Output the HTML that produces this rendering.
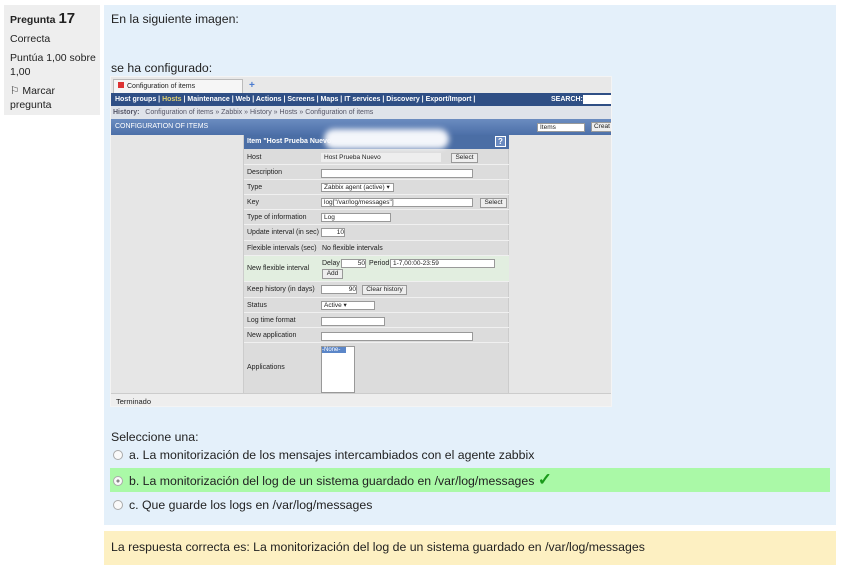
<!DOCTYPE html>
<html><head><meta charset="utf-8"><style>
*{margin:0;padding:0;box-sizing:border-box}
body{width:848px;height:578px;background:#fff;font-family:"Liberation Sans",Arial,sans-serif;position:relative;overflow:hidden;color:#222}
.a{position:absolute}
.info{left:4px;top:5px;width:96px;height:110px;background:#eee;font-size:10.5px;padding:7px 6px;line-height:14px}
.q{left:104px;top:5px;width:732px;height:520px;background:#e4f0fa}
.ans{left:104px;top:531px;width:732px;height:34px;background:#fdf0c2;font-size:12.3px;padding:9px 7px}
.t{font-size:12.3px}
.img{left:110px;top:76px;width:502px;height:331px;background:#fff;border:1px solid #f4f4f4;overflow:hidden;font-size:7px}
.img .a{font-size:7px}
.r{position:absolute;left:0;width:265px;border-bottom:1px solid #f0f0f0;padding-left:3px}
.in{position:absolute;background:#fff;border:1px solid #999;height:9px;font-size:6.5px;padding-left:2px;line-height:8px}
.btn{position:absolute;background:#eee;border:1px solid #999;height:10px;font-size:6.5px;text-align:center;line-height:8px}
.rad{display:inline-block;width:10px;height:10px;border-radius:50%;border:1px solid #aaa;background:#fafafa;vertical-align:-1px;margin-right:6px}
</style></head><body>
<div class="a info"><b style="font-size:10.5px">Pregunta</b> <b style="font-size:15px">17</b><div style="margin-top:5px">Correcta</div><div style="margin-top:5px;white-space:nowrap">Puntúa 1,00 sobre<br>1,00</div><div style="margin-top:5px">⚐ Marcar pregunta</div></div>
<div class="a q"></div>
<div class="a t" style="left:111px;top:12px">En la siguiente imagen:</div>
<div class="a t" style="left:111px;top:61px">se ha configurado:</div>
<div class="a img">
 <div class="a" style="left:0;top:0;width:500px;height:16px;background:#e8e8e8"></div>
 <div class="a" style="left:2px;top:2px;width:130px;height:14px;background:#f6f6f6;border:1px solid #bbb;border-bottom:none;padding:2px 4px"><span style="display:inline-block;width:6px;height:6px;background:#d33;margin-right:3px"></span>Configuration of items</div>
 <div class="a" style="left:138px;top:3px;color:#4a7bd0;font-size:10px;font-weight:bold">+</div>
 <div class="a" style="left:0;top:16px;width:500px;height:13px;background:#2f4f85;color:#fff;font-weight:bold;padding:3px 4px;white-space:nowrap">Host groups | <span style="color:#e0d070">Hosts</span> | Maintenance | Web | Actions | Screens | Maps | IT services | Discovery | Export/Import |<span style="position:absolute;left:440px">SEARCH:</span><span style="position:absolute;left:472px;top:2px;width:30px;height:9px;background:#fff"></span></div>
 <div class="a" style="left:0;top:29px;width:500px;height:13px;background:#dfe3ea;color:#556;padding:3px 2px"><b>History:</b> &nbsp; Configuration of items » Zabbix » History » Hosts » Configuration of items</div>
 <div class="a" style="left:0;top:42px;width:500px;height:16px;background:linear-gradient(#6b8cc0,#4c6fa8);color:#fff;padding:4px 4px">CONFIGURATION OF ITEMS</div>
 <div class="in" style="left:426px;top:46px;width:48px">Items</div>
 <div class="btn" style="left:480px;top:45px;width:22px">Creat</div>
 <div class="a" style="left:0;top:58px;width:500px;height:258px;background:#e6e6e6"></div>
 <div class="a" style="left:132px;top:58px;width:266px;height:258px;background:#dcdcdc;border-left:1px solid #ccc;border-right:1px solid #ccc">
  <div class="a" style="left:0;top:0;width:265px;height:14px;background:#4b6ea5;color:#fff;font-weight:bold;padding:3px 3px">Item "Host Prueba Nuevo<span style="position:absolute;left:80px;top:-6px;width:125px;height:20px;background:#f4f6fb;border-radius:10px;filter:blur(3px)"></span><span style="position:absolute;right:3px;top:1px;width:11px;height:11px;background:#6a8ac0;border:1px solid #fff;text-align:center;font-size:8px">?</span></div>
  <div class="r" style="top:15px;height:15px;line-height:15px">Host</div><div class="in" style="left:77px;top:18px;width:120px;background:#eee;border-color:#eee">Host Prueba Nuevo</div><div class="btn" style="left:207px;top:18px;width:27px">Select</div>
  <div class="r" style="top:30px;height:15px;line-height:15px">Description</div><div class="in" style="left:77px;top:34px;width:152px"></div>
  <div class="r" style="top:45px;height:15px;line-height:15px">Type</div><div class="in" style="left:77px;top:48px;width:73px">Zabbix agent (active) ▾</div>
  <div class="r" style="top:60px;height:15px;line-height:15px">Key</div><div class="in" style="left:77px;top:63px;width:152px">log["/var/log/messages"]</div><div class="btn" style="left:236px;top:63px;width:27px">Select</div>
  <div class="r" style="top:75px;height:15px;line-height:15px">Type of information</div><div class="in" style="left:77px;top:78px;width:70px">Log</div>
  <div class="r" style="top:90px;height:16px;line-height:16px">Update interval (in sec)</div><div class="in" style="left:77px;top:93px;width:24px;text-align:right">10</div>
  <div class="r" style="top:106px;height:15px;line-height:15px">Flexible intervals (sec)</div><div class="a" style="left:78px;top:110px">No flexible intervals</div>
  <div class="r" style="top:121px;height:26px;line-height:26px;background:#e2eee0">New flexible interval</div><div class="a" style="left:78px;top:125px">Delay</div><div class="in" style="left:97px;top:124px;width:25px;text-align:right">50</div><div class="a" style="left:125px;top:125px">Period</div><div class="in" style="left:146px;top:124px;width:105px">1-7,00:00-23:59</div><div class="btn" style="left:78px;top:134px;width:21px">Add</div>
  <div class="r" style="top:147px;height:16px;line-height:16px">Keep history (in days)</div><div class="in" style="left:77px;top:150px;width:36px;text-align:right">90</div><div class="btn" style="left:118px;top:150px;width:45px">Clear history</div>
  <div class="r" style="top:163px;height:15px;line-height:15px">Status</div><div class="in" style="left:77px;top:166px;width:54px">Active ▾</div>
  <div class="r" style="top:178px;height:15px;line-height:15px">Log time format</div><div class="in" style="left:77px;top:182px;width:64px"></div>
  <div class="r" style="top:193px;height:15px;line-height:15px">New application</div><div class="in" style="left:77px;top:197px;width:152px"></div>
  <div class="r" style="top:208px;height:50px;line-height:50px;border:none">Applications</div>
  <div class="a" style="left:77px;top:211px;width:34px;height:47px;background:#fff;border:1px solid #999"><div style="background:#5b86c8;color:#fff;width:24px;font-size:6px">-None-</div></div>
 </div>
 <div class="a" style="left:0;top:316px;width:500px;height:14px;background:#eee;border-top:1px solid #ccc;padding:3px 5px;font-size:7.5px">Terminado</div>
</div>
<div class="a t" style="left:111px;top:430px">Seleccione una:</div>
<div class="a t" style="left:113px;top:448px"><span class="rad"></span>a. La monitorización de los mensajes intercambiados con el agente zabbix</div>
<div class="a" style="left:110px;top:468px;width:720px;height:24px;background:#aaf9a7"></div>
<div class="a t" style="left:113px;top:474px"><span class="rad" style="background:radial-gradient(#888 25%,#fafafa 30%)"></span>b. La monitorización del log de un sistema guardado en /var/log/messages <span style="color:#1a9a1a;font-size:17px;font-weight:bold;line-height:10px">✓</span></div>
<div class="a t" style="left:113px;top:498px"><span class="rad"></span>c. Que guarde los logs en /var/log/messages</div>
<div class="a ans">La respuesta correcta es: La monitorización del log de un sistema guardado en /var/log/messages</div>
</body></html>
